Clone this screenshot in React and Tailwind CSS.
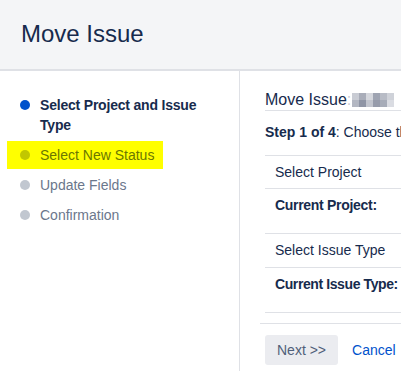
import React from 'react';

const steps = [
  { label: 'Select Project and Issue Type', state: 'current' },
  { label: 'Select New Status', state: 'highlight' },
  { label: 'Update Fields', state: 'todo' },
  { label: 'Confirmation', state: 'todo' },
];

// pixelated (redacted) issue key
const blur = [
  ['#c9ccd4', '#a9adb9', '#d5d7dd', '#9fa4b2', '#b8bcc6', '#cfd2d9'],
  ['#b3b7c2', '#8f95a5', '#c2c5ce', '#979cab', '#a7acb8', '#dadce2'],
];

const StepItem = ({ step }) => {
  if (step.state === 'highlight') {
    return (
      <div className="flex items-center ml-[7px] w-[156px] h-[28px] bg-[#ffff00] pl-[13px] -my-[4px]">
        <span className="w-[10px] h-[10px] rounded-full bg-[#c1c700] shrink-0" />
        <span className="ml-[10px] text-[14px] leading-5 text-[#6b7700]">{step.label}</span>
      </div>
    );
  }
  const current = step.state === 'current';
  return (
    <div className="flex items-start pl-[20px]">
      <span className={`mt-[5px] w-[10px] h-[10px] rounded-full shrink-0 ${current ? 'bg-[#0052cc]' : 'bg-[#c1c7d0]'}`} />
      <span className={`ml-[10px] w-[180px] text-[14px] leading-5 ${current ? 'font-bold text-[#172b4d] tracking-[-0.2px]' : 'text-[#6b778c]'}`}>
        {step.label}
      </span>
    </div>
  );
};

export default function App() {
  return (
    <div className="w-[401px] h-[371px] overflow-hidden bg-white text-[#172b4d]" style={{ fontFamily: '"Segoe UI", "Liberation Sans", Arial, sans-serif' }}>
      <div className="h-[71px] bg-[#f4f5f7] border-b-2 border-[#dfe1e6] flex items-center pl-[21px] pb-[2px]">
        <h1 className="text-[24px] leading-7 text-[#172b4d]">Move Issue</h1>
      </div>

      <div className="flex h-[300px]">
        <div className="w-[240px] shrink-0 border-r border-[#dfe1e6] pt-[24px] flex flex-col gap-[10px]">
          {steps.map((s) => (
            <StepItem key={s.label} step={s} />
          ))}
        </div>

        <div className="flex-1 min-w-0 overflow-hidden pl-[20px] pt-[19px]">
          <div className="pl-[5px] w-[400px]">
            <div className="flex items-center h-[20px] text-[16px] leading-5 whitespace-nowrap">
              <span>Move Issue</span>
              <span className="text-[#c9ccd4]">:</span>
              <span className="flex flex-col ml-[1px]">
                {blur.map((row, i) => (
                  <span key={i} className="flex">
                    {row.map((c, j) => (
                      <span key={j} className="w-[7px] h-[7px]" style={{ backgroundColor: c }} />
                    ))}
                  </span>
                ))}
              </span>
            </div>
            <div className="border-b border-[#dfe1e6]" />

            <p className="mt-[11px] text-[14px] leading-5 whitespace-nowrap">
              <span className="font-bold">Step 1 of 4</span>: Choose the project and issue type to move to
            </p>

            <div className="mt-[13px] border-t border-[#dfe1e6] text-[14px]">
              <div className="h-[32px] flex items-center pl-[10px]">Select Project</div>
              <div className="h-[45px] border-t border-[#dfe1e6] pl-[10px] pt-[6px] leading-5 font-bold tracking-[-0.3px]">Current Project:</div>
              <div className="h-[34px] border-t border-[#dfe1e6] flex items-center pl-[10px]">Select Issue Type</div>
              <div className="h-[45px] border-t border-[#dfe1e6] pl-[10px] pt-[6px] leading-5 font-bold tracking-[-0.4px] whitespace-nowrap">Current Issue Type:</div>
              <div className="border-t border-[#dfe1e6]" />
            </div>
          </div>

          <div className="mt-[10px] border-t border-[#dfe1e6] w-[400px] pt-[11px] pl-[5px] flex items-center text-[14px]">
            <button className="h-[30px] px-[12px] rounded-[3px] bg-[#ebecf0] text-[#505f79] whitespace-nowrap">Next &gt;&gt;</button>
            <a className="ml-[14px] text-[#0052cc]">Cancel</a>
          </div>
        </div>
      </div>
    </div>
  );
}
